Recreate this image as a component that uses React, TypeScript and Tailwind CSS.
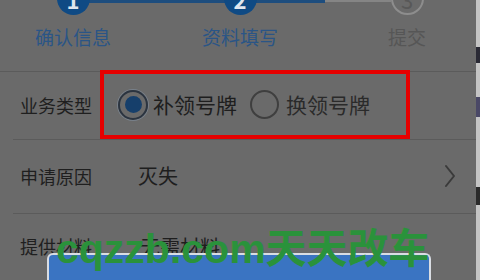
import React from "react";

const font = {
  fontFamily: '"Noto Sans CJK SC", "Liberation Sans", sans-serif',
};

function Step({
  n,
  label,
  state,
}: {
  n: string;
  label: string;
  state: "done" | "current" | "todo";
}) {
  const active = state !== "todo";
  return (
    <div className="flex w-[100px] flex-col items-center">
      <div
        className={
          active
            ? "relative flex h-[33px] w-[33px] items-center justify-center rounded-full bg-[#0f4a84] text-[22px] font-bold leading-none text-[#dfe6ee]"
            : "relative flex h-[33px] w-[33px] items-center justify-center rounded-full border-2 border-[#8d8d8d] bg-[#6a6a6a] text-[22px] leading-none text-[#585858]"
        }
      >
        {n}
      </div>
      <div
        className={
          active
            ? "mt-[10px] text-[19px] leading-[24px] text-[#2a5586]"
            : "mt-[10px] text-[19px] leading-[24px] text-[#565656]"
        }
      >
        {label}
      </div>
    </div>
  );
}

function Chevron() {
  return (
    <svg width="12" height="24" viewBox="0 0 12 24" fill="none">
      <path
        d="M2 2 L10 12 L2 22"
        stroke="#3a3a3a"
        strokeWidth="2"
        strokeLinecap="round"
        strokeLinejoin="round"
      />
    </svg>
  );
}

export default function App() {
  return (
    <div
      className="relative flex h-[280px] w-[480px] overflow-hidden bg-[#6a6a6a]"
      style={font}
    >
      <div className="flex w-[476px] flex-col">
        {/* progress steps */}
        <div className="relative h-[73px]">
          <div className="absolute left-[89px] top-0 h-[3px] w-[236px] bg-[#1d4d7e]" />
          <div className="absolute left-[325px] top-0 h-[2px] w-[66px] bg-[#858585]" />
          <div className="relative -mt-[18px] flex gap-[67px] pl-[23px]">
            <Step n="1" label="确认信息" state="done" />
            <Step n="2" label="资料填写" state="current" />
            <Step n="3" label="提交" state="todo" />
          </div>
        </div>
        <div className="h-px bg-[#5b5b5b]" />

        {/* business type */}
        <div className="flex h-[67px] items-center pl-[20px]">
          <span className="w-[73px] text-[18px] text-[#1f1f1f]">业务类型</span>
          <div className="-mt-[2px] ml-[7px] flex h-[69px] w-[310px] items-center border-4 border-[#e60000] pl-[14px]">
            <span className="flex h-[30px] w-[30px] items-center justify-center rounded-full border-2 border-[#2b3440] ring-1 ring-[#78808a]">
              <span className="h-[17px] w-[17px] rounded-full bg-[#163f6b]" />
            </span>
            <span className="ml-[5px] text-[21px] text-[#1e1e1e]">补领号牌</span>
            <span className="ml-[13px] h-[29px] w-[29px] rounded-full border-2 border-[#3f3f3f]" />
            <span className="ml-[7px] text-[21px] text-[#2a2a2a]">换领号牌</span>
          </div>
        </div>
        <div className="ml-[13px] h-px bg-[#5b5b5b]" />

        {/* reason */}
        <div className="flex h-[74px] items-center pl-[20px] pr-[20px]">
          <span className="w-[73px] text-[18px] text-[#1f1f1f]">申请原因</span>
          <span className="ml-[45px] flex-1 text-[20px] text-[#1e1e1e]">灭失</span>
          <Chevron />
        </div>
        <div className="ml-[13px] h-px bg-[#5b5b5b]" />

        {/* materials */}
        <div className="flex h-[68px] items-center pl-[20px]">
          <span className="w-[73px] text-[18px] text-[#1f1f1f]">提供材料</span>
          <span className="ml-[47px] text-[20px] text-[#1e1e1e]">无需材料</span>
        </div>
      </div>

      {/* right edge strip */}
      <div className="flex w-[4px] flex-col bg-[#c4c4c4]">
        <div className="h-[47px]" />
        <div className="h-[16px] bg-[#2a2a35]" />
        <div className="h-[34px]" />
        <div className="h-[20px] bg-[#4a4866]" />
        <div className="h-[70px]" />
        <div className="h-[18px] bg-[#2a2a2a]" />
      </div>

      {/* bottom sheet */}
      <div className="absolute left-[47px] top-[253px] h-[60px] w-[384px] rounded-t-[6px] border-2 border-b-0 border-[#d9dde3] bg-[#3a74c2] pt-[20px] text-center text-[22px] leading-[28px] text-white">
        取件方式
      </div>

      {/* watermark */}
      <div
        className="pointer-events-none absolute left-[56px] top-[229px] whitespace-nowrap text-[41px] font-bold leading-none text-[#2a923b]"
        style={{
          fontFamily: '"Liberation Sans", "Noto Sans CJK SC", sans-serif',
        }}
      >
        cqzzb.com天天改车
      </div>
    </div>
  );
}
